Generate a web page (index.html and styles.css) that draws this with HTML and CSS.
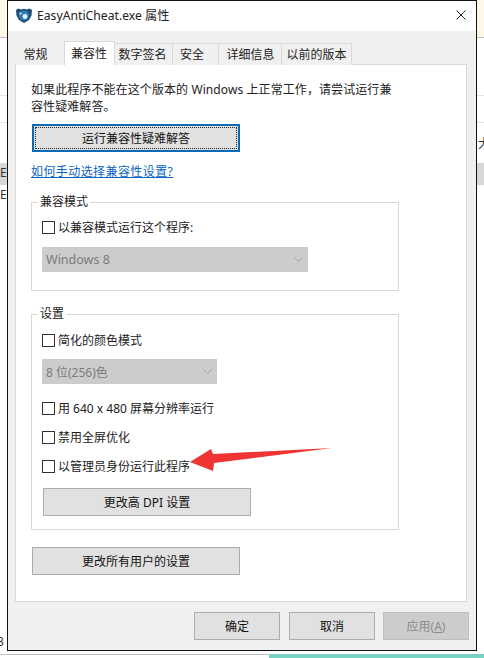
FILE: index.html
```html
<!DOCTYPE html>
<html lang="zh-CN">
<head>
<meta charset="utf-8">
<title>EasyAntiCheat.exe 属性</title>
<link rel="stylesheet" href="styles.css">
</head>
<body>
<div class="desk">
  <div class="desk-notice"></div>
  <div class="desk-line desk-line-1"></div>
  <div class="desk-line desk-line-2"></div>
  <div class="desk-row"></div>
  <span class="desk-text desk-ea1">Ea</span>
  <span class="desk-text desk-ea2">Ea</span>
  <span class="desk-text desk-right">大</span>
  <span class="desk-text desk-num">3</span>
  <div class="desk-foot"></div>
  <div class="desk-teal"></div>
</div>

<div class="window">
  <header class="titlebar">
    <svg class="app-icon" width="16" height="15" viewBox="0 0 16 15">
      <path d="M0 2 2.5.5 5 1.5 8 .8 11 1.5 13.5.5 16 2 15.5 7.5 13 12 8 15 3 12 .5 7.5Z" fill="#1d4e74"/>
      <circle cx="8" cy="7.5" r="5" fill="#2c7fb8"/>
      <circle cx="9" cy="8.5" r="2.4" fill="#eef4f8"/>
      <circle cx="4.5" cy="5.5" r="1.2" fill="#bcd8ea"/>
    </svg>
    <span class="title">EasyAntiCheat.exe 属性</span>
    <svg class="close" width="10" height="10" viewBox="0 0 10 10"><path d="M.5.5l9 9M9.5.5l-9 9" stroke="#222" fill="none"/></svg>
  </header>

  <nav class="tabs">
    <span class="tab tab-1">常规</span>
    <span class="tab tab-2 active">兼容性</span>
    <span class="tab tab-3">数字签名</span>
    <span class="tab tab-4">安全</span>
    <span class="tab tab-5">详细信息</span>
    <span class="tab tab-6">以前的版本</span>
  </nav>

  <main class="panel">
    <p class="intro">如果此程序不能在这个版本的 Windows 上正常工作，请尝试运行兼<br>容性疑难解答。</p>
    <button class="btn btn-wide btn-focus"><span class="focus-ring">运行兼容性疑难解答</span></button>
    <a class="help" href="#">如何手动选择兼容性设置?</a>

    <fieldset class="group group-compat">
      <legend>兼容模式</legend>
      <label class="check"><input type="checkbox"><span>以兼容模式运行这个程序:</span></label>
      <div class="select select-long"><span>Windows 8</span>
        <svg width="9" height="5" viewBox="0 0 9 5"><path d="M.5.5l4 4 4-4" stroke="#a2a2a2" fill="none"/></svg>
      </div>
    </fieldset>

    <fieldset class="group group-settings">
      <legend>设置</legend>
      <label class="check"><input type="checkbox"><span>简化的颜色模式</span></label>
      <div class="select select-short"><span>8 位(256)色</span>
        <svg width="9" height="5" viewBox="0 0 9 5"><path d="M.5.5l4 4 4-4" stroke="#a2a2a2" fill="none"/></svg>
      </div>
      <label class="check check-640"><input type="checkbox"><span>用 640 x 480 屏幕分辨率运行</span></label>
      <label class="check check-next"><input type="checkbox"><span>禁用全屏优化</span></label>
      <label class="check check-next"><input type="checkbox"><span>以管理员身份运行此程序</span></label>
      <button class="btn btn-wide btn-dpi">更改高 DPI 设置</button>
    </fieldset>

    <button class="btn btn-wide btn-all">更改所有用户的设置</button>
  </main>

  <footer class="actions">
    <button class="btn btn-action">确定</button>
    <button class="btn btn-action">取消</button>
    <button class="btn btn-action btn-disabled">应用(<u>A</u>)</button>
  </footer>
</div>

<svg class="arrow" width="150" height="30" viewBox="0 0 150 30">
  <path d="M0 14 21 1 23 6 142 0 24 15 23 23Z" fill="#f03434"/>
</svg>
</body>
</html>
```
FILE: styles.css
```css
* { box-sizing: border-box; }
html, body { margin: 0; height: 100%; }
body {
  position: relative;
  width: 484px;
  height: 658px;
  overflow: hidden;
  background: #fff;
  font-family: "Noto Sans", "Noto Sans CJK SC", sans-serif;
  font-size: 12px;
  color: #111;
}
.desk { position: absolute; inset: 0; }
.desk-notice {
  position: absolute; left: 0; top: 0; width: 100%; height: 38px;
  background: #fff8e8; border-bottom: 1px solid #bdbdbd;
}
.desk-line { position: absolute; left: 0; width: 100%; height: 1px; background: #e4e4e4; }
.desk-line-1 { top: 95px; }
.desk-line-2 { top: 122px; }
.desk-row { position: absolute; left: 0; top: 163px; width: 100%; height: 22px; background: #d8d8d8; }
.desk-text { position: absolute; line-height: 16px; color: #333; }
.desk-ea1 { left: 0; top: 165px; }
.desk-ea2 { left: 0; top: 187px; }
.desk-right { left: 478px; top: 136px; }
.desk-num { left: -3px; top: 634px; }
.desk-foot { position: absolute; left: 0; top: 654px; right: 0; height: 1px; background: #bdbdbd; }
.desk-teal { position: absolute; left: 269px; top: 654px; right: 0; bottom: 0; background: #76d2c1; }

.window {
  position: absolute; left: 7px; top: 0; width: 470px; height: 651px;
  display: flex; flex-direction: column;
  background: #f0f0f0; border: 1px solid #111;
}
.titlebar {
  height: 30px; flex: none; display: flex; align-items: center;
  padding: 0 8px 2px; background: #fff;
}
.app-icon { flex: none; }
.title { margin-left: 5px; font-size: 12.2px; flex: 1; color: #222; }
.close { flex: none; margin-right: 2px; }

.tabs { display: flex; align-items: flex-end; height: 34px; flex: none; padding-left: 8px; position: relative; z-index: 1; margin-bottom: -1px; }
.tab {
  height: 22px; display: flex; align-items: center; justify-content: center;
  background: #f0f0f0; border: 1px solid #d9d9d9; border-bottom: 0; border-left: 0;
  padding-bottom: 2px;
  color: #222;
}
.tab-1 { width: 48px; border-top-color: #f0f0f0; border-right: 0; padding-right: 9px; }
.tab-2 { width: 51px; height: 24px; background: #fff; border-left: 1px solid #d9d9d9; padding-bottom: 2px; padding-right: 1px; }
.tab-3 { width: 58px; padding-right: 2px; }
.tab-4 { width: 46px; justify-content: flex-start; padding-left: 7px; }
.tab-5 { width: 63px; padding-left: 1px; }
.tab-6 { width: 70px; }

.panel {
  margin-left: 7px; width: 452px; height: 538px; flex: none;
  background: #fff; border: 1px solid #d9d9d9;
  padding: 16px 0 0 15px;
}
.intro { margin: 0; line-height: 17px; height: 33px; color: #222; letter-spacing: .09px; }

.btn {
  display: block; padding: 0; margin: 0; font: inherit; color: #111;
  background: #e1e1e1; border: 1px solid #adadad; height: 28px;
}
.btn-wide { width: 208px; }
.btn-focus { margin: 10px 0 0 1px; border: 2px solid #0a6ab6; padding: 1px; }
.focus-ring { display: flex; align-items: center; justify-content: center; height: 100%; border: 1px dotted #222; }
.help { display: block; margin-top: 11px; line-height: 17px; width: max-content; white-space: nowrap; color: #0a66c2; letter-spacing: .42px; }

.group { margin: 0; padding: 0 0 0 10px; border: 1px solid #d9d9d9; width: 368px; position: relative; min-width: 0; }
.group legend { padding: 0 2px; margin-left: -4px; line-height: 16px; color: #222; background: #fff; }
.group-compat { margin-top: 14px; height: 97px; padding-top: 11px; }
.group-settings { margin-top: 15px; height: 224px; padding-top: 12px; }

.check { display: flex; align-items: center; height: 13px; gap: 3px; line-height: 13px; color: #222; }
.check input {
  appearance: none; width: 13px; height: 13px; margin: 0; flex: none;
  background: #fff; border: 1px solid #333;
}
.check span { white-space: nowrap; }
.check-640 { margin-top: 18px; }
.check-next { margin-top: 16px; }

.select {
  display: flex; align-items: center; justify-content: space-between;
  height: 25px; padding: 0 5px 0 4px;
  background: #ccc; color: #7b7b7b;
}
.select-long { width: 266px; margin-top: 13px; font-size: 12.5px; }
.select-short { width: 175px; margin-top: 12px; }
.btn-dpi { margin: 15px 0 0 1px; }
.btn-all { margin: 17px 0 0 1px; }

.actions { display: flex; justify-content: flex-end; gap: 9px; padding: 10px 7px 0 0; }
.btn-action { width: 86px; }
.btn-action:last-child { margin-left: -1px; }
.btn-disabled { background: #ccc; border-color: #bfbfbf; color: #8a8a8a; }

.arrow { position: absolute; left: 190px; top: 448px; }
```
